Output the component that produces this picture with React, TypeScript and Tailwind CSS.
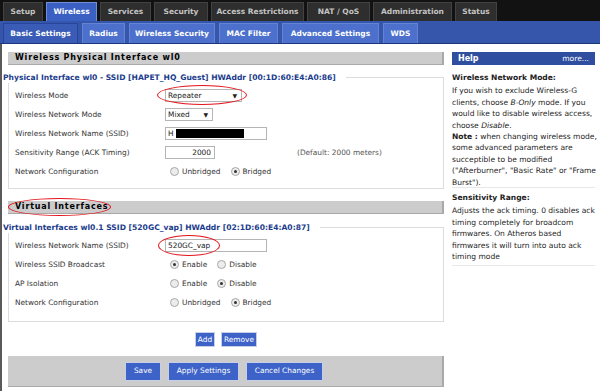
import React from 'react';

const TABS = [
  { label: 'Setup', w: 'w-[40px]' },
  { label: 'Wireless', w: 'w-[51px]', active: true },
  { label: 'Services', w: 'w-[51px]' },
  { label: 'Security', w: 'w-[54px]' },
  { label: 'Access Restrictions', w: 'w-[93px]' },
  { label: 'NAT / QoS', w: 'w-[63px]' },
  { label: 'Administration', w: 'w-[79px]' },
  { label: 'Status', w: 'w-[42px]' },
];

const SUBTABS = [
  { label: 'Basic Settings', w: 'w-[75px]', active: true },
  { label: 'Radius', w: 'w-[43px]' },
  { label: 'Wireless Security', w: 'w-[86px]' },
  { label: 'MAC Filter', w: 'w-[59px]' },
  { label: 'Advanced Settings', w: 'w-[97px]' },
  { label: 'WDS', w: 'w-[35px]' },
];

function Radio({ checked, label }: { checked?: boolean; label: string }) {
  return (
    <span className="flex items-center">
      <span className="w-[9px] h-[9px] rounded-full border border-[#a8a8a8] bg-[#ececec] flex items-center justify-center">
        {checked && <span className="w-[3px] h-[3px] rounded-full bg-[#333]" />}
      </span>
      <span className="ml-[3px]">{label}</span>
    </span>
  );
}

function Row({ label, children }: { label: string; children: React.ReactNode }) {
  return (
    <div className="flex items-center h-[19px]">
      <div className="w-[156px] pl-[6px] text-[#333]">{label}</div>
      <div className="flex items-center">{children}</div>
    </div>
  );
}

function Select({ value, w }: { value: string; w: string }) {
  return (
    <div className={`${w} h-[13px] border border-[#b5b5b5] bg-white flex items-center justify-between pl-[2px] pr-[4px] text-[#222]`}>
      <span>{value}</span>
      <span className="text-[6px]">▼</span>
    </div>
  );
}

function Legend({ children }: { children: React.ReactNode }) {
  return (
    <div className="-mt-[6px] -ml-[6px] w-fit bg-white pr-[10px] h-[11px] leading-[11px] font-bold text-[#1b3c8c] text-[7.6px] whitespace-nowrap">
      {children}
    </div>
  );
}

function SectionHeader({ children }: { children: React.ReactNode }) {
  return (
    <div className="ml-[6px] w-[436px] h-[13px] bg-[#cccccc] border-r-2 border-b border-[#a9a9a9] pl-[7px] flex items-center font-bold text-[8px] tracking-[0.8px] text-black">
      {children}
    </div>
  );
}

function Btn({ label, w }: { label: string; w: string }) {
  return (
    <div className={`${w} h-full bg-[#3e63c8] border border-[#c6cfe6] text-white flex items-center justify-center`}>
      {label}
    </div>
  );
}

export default function App() {
  return (
    <div className="w-[600px] h-[391px] bg-white overflow-hidden relative font-['DejaVu_Sans',sans-serif] text-[7.4px]">
      {/* main tabs */}
      <div className="h-[21px] bg-[#121212] flex items-end pl-[3px] gap-[3px]">
        {TABS.map((t) => (
          <div
            key={t.label}
            className={`${t.w} h-[19px] flex items-center justify-center font-bold text-[7.5px] border border-b-0 ${
              t.active ? 'bg-[#3a60c4] border-[#6f8fd8] text-white' : 'bg-[#2e2e2e] border-[#424242] text-[#c4c4c4]'
            }`}
          >
            {t.label}
          </div>
        ))}
      </div>
      {/* sub tabs */}
      <div className="h-[23px] bg-[#3556aa] border-b border-[#1d3878] flex items-end pl-[3px] gap-[4px]">
        {SUBTABS.map((t) => (
          <div
            key={t.label}
            className={`${t.w} h-[20px] flex items-center justify-center font-bold text-[7.5px] text-white border border-b-0 ${
              t.active ? 'bg-[#3a5cb6] border-[#27459a]' : 'bg-[#4c70cb] border-[#6384d4]'
            }`}
          >
            {t.label}
          </div>
        ))}
      </div>

      <div className="flex">
        {/* left content */}
        <div className="w-[447px] h-[347px] shrink-0 border-l-2 border-[#5a5a5a] pt-[8px]">
          <SectionHeader>Wireless Physical Interface wl0</SectionHeader>
          <div className="ml-[6px] w-[436px] mt-[12px] border border-[#dcdcdc] pb-[7px]">
            <Legend>Physical Interface wl0 - SSID [HAPET_HQ_Guest] HWAddr [00:1D:60:E4:A0:86]</Legend>
            <div className="mt-[3px]">
              <Row label="Wireless Mode">
                <Select value="Repeater" w="w-[77px]" />
              </Row>
              <Row label="Wireless Network Mode">
                <Select value="Mixed" w="w-[48px]" />
              </Row>
              <Row label="Wireless Network Name (SSID)">
                <div className="w-[102px] h-[13px] border border-[#b5b5b5] flex items-center pl-[2px] text-[#222]">
                  H<span className="ml-[2px] w-[68px] h-[9px] bg-black" />
                </div>
              </Row>
              <Row label="Sensitivity Range (ACK Timing)">
                <div className="w-[50px] h-[13px] border border-[#b5b5b5] flex items-center justify-end pr-[3px] text-[#222]">2000</div>
                <span className="ml-[82px] text-[#555]">(Default: 2000 meters)</span>
              </Row>
              <Row label="Network Configuration">
                <div className="flex items-center gap-[10px] pl-[5px] text-[#333]">
                  <Radio label="Unbridged" />
                  <Radio checked label="Bridged" />
                </div>
              </Row>
            </div>
          </div>

          <div className="mt-[12px]">
            <SectionHeader>Virtual Interfaces</SectionHeader>
          </div>
          <div className="ml-[6px] w-[436px] mt-[13px] border border-[#dcdcdc] pb-[9px]">
            <Legend>Virtual Interfaces wl0.1 SSID [520GC_vap] HWAddr [02:1D:60:E4:A0:87]</Legend>
            <div className="mt-[3px]">
              <Row label="Wireless Network Name (SSID)">
                <div className="w-[102px] h-[13px] border border-[#b5b5b5] flex items-center pl-[2px] text-[#222]">520GC_vap</div>
              </Row>
              <Row label="Wireless SSID Broadcast">
                <div className="flex items-center gap-[10px] pl-[5px] text-[#333]">
                  <Radio checked label="Enable" />
                  <Radio label="Disable" />
                </div>
              </Row>
              <Row label="AP Isolation">
                <div className="flex items-center gap-[10px] pl-[5px] text-[#333]">
                  <Radio label="Enable" />
                  <Radio checked label="Disable" />
                </div>
              </Row>
              <Row label="Network Configuration">
                <div className="flex items-center gap-[10px] pl-[5px] text-[#333]">
                  <Radio label="Unbridged" />
                  <Radio checked label="Bridged" />
                </div>
              </Row>
            </div>
          </div>

          <div className="ml-[6px] w-[436px] mt-[10px] h-[15px] flex justify-center gap-[6px]">
            <Btn label="Add" w="w-[20px]" />
            <Btn label="Remove" w="w-[36px]" />
          </div>

          <div className="ml-[6px] w-[436px] mt-[9px] h-[31px] bg-[#cccccc] border-r-2 border-b border-[#a9a9a9] flex items-center justify-center gap-[6px]">
            <div className="h-[19px] flex gap-[7px] -ml-[2px]">
              <Btn label="Save" w="w-[36px]" />
              <Btn label="Apply Settings" w="w-[71px]" />
              <Btn label="Cancel Changes" w="w-[77px]" />
            </div>
          </div>
        </div>

        {/* help */}
        <div className="w-[147px] shrink-0 ml-[5px] pt-[8px] text-[7.55px] leading-[11.4px] text-[#222]">
          <div className="w-[143px] h-[13px] bg-[#2f4e9f] flex items-center justify-between px-[6px] text-white">
            <span className="font-bold text-[8px]">Help</span>
            <span>more...</span>
          </div>
          <div className="mt-[7px] font-bold">Wireless Network Mode:</div>
          <div className="mt-[2px]">
            If you wish to exclude Wireless-G clients, choose <i>B-Only</i> mode. If you would like to disable wireless access, choose <i>Disable</i>.
            <br />
            <b>Note :</b> when changing wireless mode, some advanced parameters are succeptible to be modified ("Afterburner", "Basic Rate" or "Frame Burst").
          </div>
          <div className="w-[143px] -mt-[1px] border-t border-[#e8e8e8]" />
          <div className="mt-[4px] font-bold">Sensitivity Range:</div>
          <div className="mt-[2px]">
            Adjusts the ack timing. 0 disables ack timing completely for broadcom firmwares. On Atheros based firmwares it will turn into auto ack timing mode
          </div>
          <div className="w-[143px] mt-[2px] border-t border-[#e8e8e8]" />
        </div>
      </div>

      {/* red annotation ellipses */}
      <div className="absolute left-[157px] top-[85px] w-[90px] h-[20px] rounded-[50%] border-[1.5px] border-[#e3141b]" />
      <div className="absolute left-[8px] top-[198px] w-[103px] h-[18px] rounded-[50%] border-[1.5px] border-[#e3141b]" />
      <div className="absolute left-[158px] top-[235px] w-[62px] h-[21px] rounded-[50%] border-[1.5px] border-[#e3141b]" />
    </div>
  );
}
